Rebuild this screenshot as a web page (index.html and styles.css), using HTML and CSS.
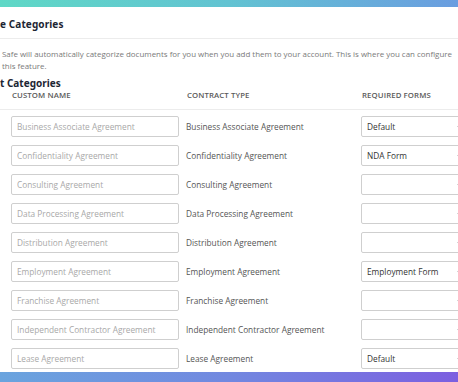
FILE: index.html
```html
<!DOCTYPE html>
<html lang="en">
<head>
    <meta charset="UTF-8">
    <meta name="viewport" content="width=device-width, initial-scale=1.0">
    <title>Document Categories</title>
    <link rel="stylesheet" href="styles.css">
</head>
<body>
    <div class="top-bar"></div>

    <div class="page-head">
        <h1>e Categories</h1>
    </div>

    <div class="content">
        <p class="intro">Safe will automatically categorize documents for you when you add them to your account. This is where you can configure<br>this feature.</p>

        <h2>t Categories</h2>

        <div class="cat-table">
            <div class="cat-row cat-head">
                <div>Custom Name</div>
                <div>Contract Type</div>
                <div>Required Forms</div>
            </div>

            <div class="cat-row">
                <input type="text" placeholder="Business Associate Agreement">
                <div class="type">Business Associate Agreement</div>
                <div class="select">Default</div>
            </div>
            <div class="cat-row">
                <input type="text" placeholder="Confidentiality Agreement">
                <div class="type">Confidentiality Agreement</div>
                <div class="select">NDA Form</div>
            </div>
            <div class="cat-row">
                <input type="text" placeholder="Consulting Agreement">
                <div class="type">Consulting Agreement</div>
                <div class="select"></div>
            </div>
            <div class="cat-row">
                <input type="text" placeholder="Data Processing Agreement">
                <div class="type">Data Processing Agreement</div>
                <div class="select"></div>
            </div>
            <div class="cat-row">
                <input type="text" placeholder="Distribution Agreement">
                <div class="type">Distribution Agreement</div>
                <div class="select"></div>
            </div>
            <div class="cat-row">
                <input type="text" placeholder="Employment Agreement">
                <div class="type">Employment Agreement</div>
                <div class="select">Employment Form</div>
            </div>
            <div class="cat-row">
                <input type="text" placeholder="Franchise Agreement">
                <div class="type">Franchise Agreement</div>
                <div class="select"></div>
            </div>
            <div class="cat-row">
                <input type="text" placeholder="Independent Contractor Agreement">
                <div class="type">Independent Contractor Agreement</div>
                <div class="select"></div>
            </div>
            <div class="cat-row">
                <input type="text" placeholder="Lease Agreement">
                <div class="type">Lease Agreement</div>
                <div class="select">Default</div>
            </div>
        </div>
    </div>

    <div class="bottom-bar"></div>
</body>
</html>
```

FILE: styles.css
```css
* {
    margin: 0;
    padding: 0;
    box-sizing: border-box;
}

body {
    font-family: 'Open Sans', 'Noto Sans', Arial, sans-serif;
    color: #555;
    background: #fff;
    overflow: hidden;
    height: 382px;
}

.top-bar {
    height: 7px;
    background: linear-gradient(90deg, #5fd8c6, #62c3d2 50%, #6a9de0);
}

.page-head {
    height: 32px;
    border-bottom: 1px solid #ececec;
    display: flex;
    align-items: center;
}

h1 {
    font-family: 'Noto Sans', Arial, sans-serif;
    font-size: 10px;
    font-weight: 700;
    color: #1d2633;
    letter-spacing: 0.1px;
    padding-top: 2px;
}

.content {
    padding-top: 10px;
}

.intro {
    font-size: 7.95px;
    line-height: 11.5px;
    color: #7a7a7a;
    padding-left: 2px;
    white-space: nowrap;
}

h2 {
    font-family: 'Noto Sans', Arial, sans-serif;
    font-size: 10px;
    font-weight: 700;
    color: #1d2633;
    margin-top: 5px;
    line-height: 13px;
}

.cat-row {
    display: grid;
    grid-template-columns: 175px 175px 120px;
    align-items: center;
    padding-left: 11px;
    height: 29px;
}

.cat-head {
    height: 20px;
    align-items: start;
    text-transform: uppercase;
    font-size: 7.8px;
    font-weight: 600;
    color: #5a5a5a;
    letter-spacing: 0.1px;
    border-bottom: 1px solid #ececec;
    margin-bottom: 2px;
}

.cat-head div {
    padding-left: 1px;
}

.cat-row input {
    width: 168px;
    height: 21px;
    border: 1px solid #cfcfcf;
    border-radius: 2px;
    padding: 0 5px;
    font-family: inherit;
    font-size: 8.3px;
    color: #555;
}

.cat-row input::placeholder {
    color: #a8a8a8;
}

.type {
    font-size: 8.3px;
    color: #555;
}

.select {
    position: relative;
    height: 21px;
    width: 110px;
    border: 1px solid #cfcfcf;
    border-radius: 2px;
    padding: 0 5px;
    display: flex;
    align-items: center;
    font-size: 8.3px;
    color: #333;
}

.select::after {
    content: "";
    position: absolute;
    left: 95px;
    top: 9px;
    border-left: 2px solid transparent;
    border-right: 2px solid transparent;
    border-top: 2px solid #aaa;
}

.bottom-bar {
    position: fixed;
    left: 0;
    right: 0;
    bottom: 0;
    height: 10px;
    background: linear-gradient(90deg, #6aa4de, #7288e0 50%, #7c5fe0);
}
```
